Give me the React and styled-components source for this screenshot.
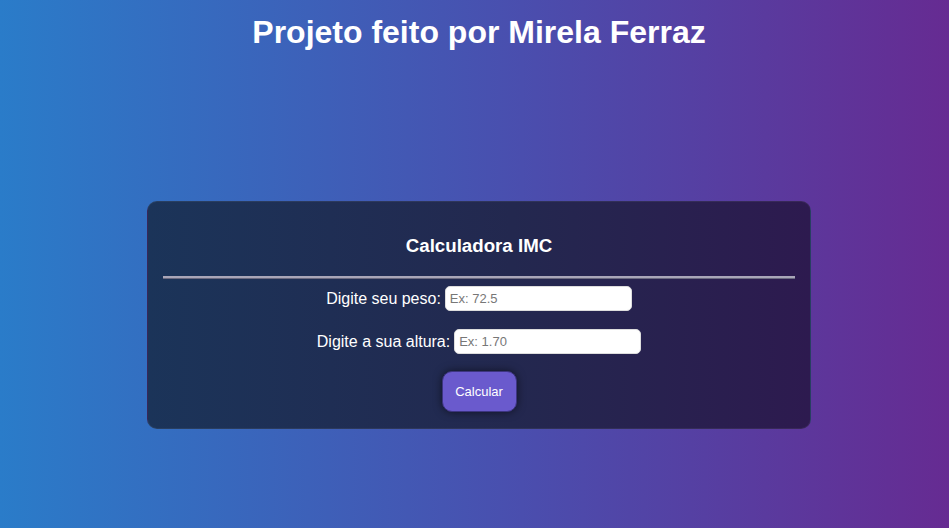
import React from "react";
import styled, { createGlobalStyle } from "styled-components";

const GlobalStyle = createGlobalStyle`
  html, body {
    margin: 0;
    padding: 0;
    height: 100%;
  }
  body {
    font-family: "Liberation Sans", Arial, sans-serif;
    background: linear-gradient(90deg, #2a7cc9 0%, #4a4eae 55%, #662b92 100%);
    color: #fff;
  }
  #root {
    min-height: 100%;
  }
`;

const Page = styled.div`
  min-height: 528px;
  display: flex;
  flex-direction: column;
  align-items: center;
  padding-left: 9px;
  box-sizing: border-box;
`;

const Heading = styled.h1`
  margin: 0;
  padding-top: 14px;
  font-size: 32px;
  line-height: 37px;
  font-weight: 700;
  color: #fff;
`;

const Card = styled.div`
  margin-top: 150px;
  width: 664px;
  box-sizing: border-box;
  padding: 33px 15px 16px;
  border-radius: 10px;
  background: linear-gradient(90deg, #1b3459 0%, #23284f 55%, #2d1a4f 100%);
  border: 1px solid rgba(255, 255, 255, 0.06);
  display: flex;
  flex-direction: column;
  align-items: center;
`;

const CardTitle = styled.h2`
  margin: 0;
  font-size: 18.7px;
  line-height: 22px;
  font-weight: 700;
  color: #fff;
`;

const Divider = styled.hr`
  align-self: stretch;
  margin: 19px 0 7px;
  height: 0;
  border: none;
  border-top: 2px solid #a9a6b8;
  border-bottom: 1px solid #6b6a80;
`;

const Row = styled.div`
  display: flex;
  align-items: center;
  gap: 4px;
  margin-bottom: ${(p) => p.$space}px;
`;

const Label = styled.label`
  font-size: 16px;
  color: #fff;
`;

const Input = styled.input`
  width: 187px;
  height: 25px;
  box-sizing: border-box;
  border: 1px solid #ddd;
  border-radius: 5px;
  padding: 0 4px;
  font-family: "Liberation Sans", Arial, sans-serif;
  font-size: 13px;
  outline: none;

  &::placeholder {
    color: #777;
  }
`;

const Button = styled.button`
  width: 75px;
  height: 41px;
  border: 1px solid #3d3580;
  border-radius: 10px;
  background: #6a5acd;
  color: #fff;
  font-family: "Liberation Sans", Arial, sans-serif;
  font-size: 13px;
  box-shadow: 0 0 8px rgba(0, 0, 0, 0.55);
  cursor: pointer;
`;

const App = () => {
  return (
    <>
      <GlobalStyle />
      <Page>
        <Heading>Projeto feito por Mirela Ferraz</Heading>
        <Card>
          <CardTitle>Calculadora IMC</CardTitle>
          <Divider />
          <Row $space={18}>
            <Label htmlFor="peso">Digite seu peso:</Label>
            <Input id="peso" type="text" placeholder="Ex: 72.5" />
          </Row>
          <Row $space={17}>
            <Label htmlFor="altura">Digite a sua altura:</Label>
            <Input id="altura" type="text" placeholder="Ex: 1.70" />
          </Row>
          <Button>Calcular</Button>
        </Card>
      </Page>
    </>
  );
};

export default App;
